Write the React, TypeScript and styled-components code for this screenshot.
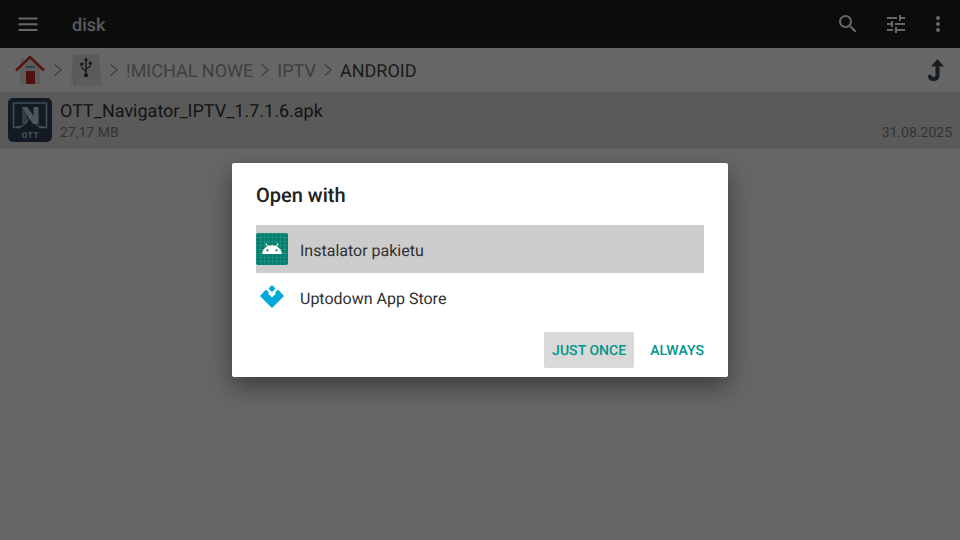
import React, {FC} from 'react';
import styled, {createGlobalStyle} from 'styled-components';

const GlobalStyle = createGlobalStyle`
    html, body {
        margin: 0;
        padding: 0;
        width: 960px;
        height: 540px;
        overflow: hidden;
        background: #fff;
        font-family: Roboto, "Liberation Sans", sans-serif;
        text-rendering: geometricPrecision;
    }
`;

const Page = styled.div`
    position: relative;
    width: 960px;
    height: 540px;
    display: flex;
    flex-direction: column;
    background: #ffffff;
`;

const AppBar = styled.header`
    flex: 0 0 48px;
    display: flex;
    align-items: center;
    background: #202020;
    color: #ffffff;
    padding: 0 10px 0 16px;
`;

const Title = styled.div`
    flex: 1;
    margin-left: 32px;
    padding-top: 2px;
    font-size: 18px;
    font-weight: 500;
    color: #e0e0e0;
`;

const ActionIcon = styled.svg<{gap: number}>`
    display: block;
    margin-left: ${props => props.gap}px;
`;

const Breadcrumb = styled.nav`
    flex: 0 0 44px;
    display: flex;
    align-items: center;
    padding: 0 16px 0 14px;
    font-size: 18px;
    box-sizing: border-box;
    border-bottom: 1px solid #f2f2f2;
`;

const Crumb = styled.span<{active?: boolean}>`
    padding-top: 3px;
    color: ${props => (props.active ? '#444444' : '#9c9c9c')};
`;

const Chevron = styled.svg`
    margin: 0 8px;
    flex: none;
`;

const UpButton = styled.div`
    margin-left: auto;
    display: flex;
`;

const FileRow = styled.div`
    flex: 0 0 57px;
    display: flex;
    align-items: stretch;
    box-sizing: border-box;
    background: #e0e0e0;
    padding: 6px 8px 0 8px;
    border-bottom: 1px solid #ececec;
`;

const FileInfo = styled.div`
    flex: 1;
    margin-left: 8px;
`;

const FileName = styled.div`
    font-size: 18px;
    line-height: 26px;
    padding-top: 1px;
    color: #333333;
`;

const FileMeta = styled.div`
    display: flex;
    justify-content: space-between;
    font-size: 14px;
    line-height: 16px;
    color: #808080;
`;

const Scrim = styled.div`
    position: absolute;
    inset: 0;
    background: rgba(0, 0, 0, 0.6);
    display: flex;
    align-items: center;
    justify-content: center;
`;

const Dialog = styled.div`
    width: 496px;
    height: 214px;
    box-sizing: border-box;
    padding: 0 24px;
    background: #ffffff;
    border-radius: 2px;
    box-shadow: 0 10px 24px rgba(0, 0, 0, 0.4);
    display: flex;
    flex-direction: column;
`;

const DialogTitle = styled.div`
    height: 62px;
    box-sizing: border-box;
    padding-top: 2px;
    display: flex;
    align-items: center;
    font-size: 20px;
    font-weight: 500;
    color: #212121;
`;

const Option = styled.div<{selected?: boolean}>`
    height: 48px;
    display: flex;
    align-items: center;
    background: ${props => (props.selected ? '#cccccc' : 'transparent')};
    font-size: 16px;
    color: #303030;
`;

const OptionLabel = styled.span`
    margin-left: 12px;
    padding-top: 2px;
`;

const Actions = styled.div`
    display: flex;
    justify-content: flex-end;
    margin: 11px -8px 0 0;
    gap: 8px;
`;

const ActionButton = styled.div<{focused?: boolean}>`
    height: 36px;
    box-sizing: border-box;
    display: flex;
    align-items: center;
    padding: 2px 8px 0;
    border-radius: 2px;
    background: ${props => (props.focused ? '#d9d9d9' : 'transparent')};
    color: #009688;
    font-size: 14px;
    font-weight: 500;
    letter-spacing: 0.05px;
`;

const MenuIcon: FC = () => (
    <svg width="24" height="24" viewBox="0 0 24 24" fill="#ffffff">
        <path d="M2.5 5.5h19v2h-19zM2.5 11.2h19v2h-19zM2.5 17h19v2h-19z" />
    </svg>
);

const SearchIcon: FC = () => (
    <ActionIcon gap={0} width="24" height="24" viewBox="0 0 24 24" fill="#ffffff">
        <path d="M15.5 14h-.79l-.28-.27A6.471 6.471 0 0 0 16 9.5 6.5 6.5 0 1 0 9.5 16c1.61 0 3.09-.59 4.23-1.57l.27.28v.79l5 4.99L20.49 19l-4.99-5zm-6 0C7.01 14 5 11.99 5 9.5S7.01 5 9.5 5 14 7.01 14 9.5 11.99 14 9.5 14z" />
    </ActionIcon>
);

const TuneIcon: FC = () => (
    <ActionIcon gap={24} width="24" height="24" viewBox="0 0 24 24" fill="#ffffff">
        <path d="M3 17v2h6v-2H3zM3 5v2h10V5H3zm10 16v-2h8v-2h-8v-2h-2v6h2zM7 9v2H3v2h4v2h2V9H7zm14 4v-2H11v2h10zm-6-4h2V7h4V5h-4V3h-2v6z" />
    </ActionIcon>
);

const DotsIcon: FC = () => (
    <ActionIcon gap={18} width="24" height="24" viewBox="0 0 24 24" fill="#ffffff">
        <circle cx="12" cy="6" r="2" />
        <circle cx="12" cy="12" r="2" />
        <circle cx="12" cy="18" r="2" />
    </ActionIcon>
);

const ChevronGlyph: FC = () => (
    <Chevron width="8" height="12" viewBox="0 0 8 12" fill="none" stroke="#9a9a9a" strokeWidth="1.3">
        <path d="M0.8 0.6 7 6 0.8 11.4" />
    </Chevron>
);

const HomeIcon: FC = () => (
    <svg width="32" height="32" viewBox="0 0 32 32">
        <rect x="7" y="4" width="3" height="8" fill="#dcdcdc" />
        <path d="M6 14 16 5l10 9v16H6z" fill="#e4e4e4" />
        <rect x="12" y="17" width="9" height="13" fill="#c9262c" />
        <rect x="12" y="12" width="9" height="1.6" fill="#4aa3c8" />
        <path d="M2 16.5 16 3l14 13.5" fill="none" stroke="#d8343a" strokeWidth="2.6" />
    </svg>
);

const UsbDriveIcon: FC = () => (
    <svg width="32" height="32" viewBox="0 0 32 32">
        <path d="M3 0.5h26l2 25H1z" fill="#e2e2e2" />
        <rect x="0.5" y="25" width="31" height="7" rx="1.5" fill="#ececec" />
        <circle cx="5" cy="28.5" r="1.1" fill="#7bd648" />
        <path
            d="M16 3.5l-2.2 3h1.5v9.500l-3-2.600v-2.200h1v-2.400h-3v2.400h1v3l4 3.400v1.800a2 2 0 1 0 1.400 0v-4l4-2.800v-2.200h1.100v-2.600h-2.900v2.600h.9v1.500l-3.100 2.100V6.500h1.500z"
            fill="#333333"
        />
    </svg>
);

const UpIcon: FC = () => (
    <svg width="16" height="22" viewBox="0 0 16 22" fill="none">
        <path d="M9.500 0 16 7.500H3z" fill="#3c4a54" />
        <path d="M9.500 6v10.500a3.500 3.500 0 0 1-3.500 3.500H5A3.200 3.200 0 0 1 2 17.500" stroke="#3c4a54" strokeWidth="4" strokeLinecap="round" />
    </svg>
);

const OttIcon: FC = () => (
    <svg width="44" height="44" viewBox="0 0 44 44">
        <rect width="44" height="44" rx="5" fill="#2f4558" />
        <path d="M13 29.500H5.500V5H38.500V29.500H31" fill="none" stroke="#a9bccb" strokeWidth="1.600" />
        <rect x="14" y="9" width="5" height="17" fill="#7b93a6" />
        <rect x="25.500" y="9" width="5" height="17" fill="#c4d3de" />
        <path d="M14 9h5.500l11 17h-5.500z" fill="#c4d3de" />
        <path d="M8 29c7 0 11-3 14-12 3 9 7 12 14 12" fill="none" stroke="#d8e4ec" strokeWidth="1" />
        <text x="22.500" y="39.500" fontSize="8" fontWeight="700" fontFamily="Roboto" textAnchor="middle" letterSpacing="0.800" fill="#c4d3de">
            OTT
        </text>
    </svg>
);

const InstallerIcon: FC = () => (
    <svg width="32" height="32" viewBox="0 0 32 32">
        <defs>
            <pattern id="grid" width="4" height="4" patternUnits="userSpaceOnUse">
                <path d="M4 0H0v4" fill="none" stroke="#ffffff" strokeOpacity="0.3" strokeWidth="0.600" />
            </pattern>
        </defs>
        <rect width="32" height="32" rx="2" fill="#00806f" />
        <rect width="32" height="32" rx="2" fill="url(#grid)" />
        <path
            d="M6 21c.3-3.600 2.200-6.300 5-7.600L9.400 10.600l.8-.5 1.700 2.900a11 11 0 0 1 8.200 0l1.700-2.900.8.5-1.600 2.800c2.800 1.300 4.700 4 5 7.600z"
            fill="#ffffff"
        />
        <circle cx="11.500" cy="17.300" r="1.100" fill="#00806f" />
        <circle cx="20.500" cy="17.300" r="1.100" fill="#00806f" />
    </svg>
);

const UptodownIcon: FC = () => (
    <svg width="32" height="32" viewBox="0 0 32 32" fill="#00a8d8">
        <path d="M16 4l3.600 3.600L16 11.200l-3.600-3.600z" />
        <path d="M10 8.500l3 3-1 1 4 4 4-4-1-1 3-3 6 6.500L16 27 4 15z" />
    </svg>
);

const App: FC = () => (
    <Page>
        <GlobalStyle />
        <AppBar>
            <MenuIcon />
            <Title>disk</Title>
            <SearchIcon />
            <TuneIcon />
            <DotsIcon />
        </AppBar>
        <Breadcrumb>
            <HomeIcon />
            <ChevronGlyph />
            <UsbDriveIcon />
            <ChevronGlyph />
            <Crumb>!MICHAL NOWE</Crumb>
            <ChevronGlyph />
            <Crumb>IPTV</Crumb>
            <ChevronGlyph />
            <Crumb active>ANDROID</Crumb>
            <UpButton>
                <UpIcon />
            </UpButton>
        </Breadcrumb>
        <FileRow>
            <OttIcon />
            <FileInfo>
                <FileName>OTT_Navigator_IPTV_1.7.1.6.apk</FileName>
                <FileMeta>
                    <span>27,17 MB</span>
                    <span>31.08.2025</span>
                </FileMeta>
            </FileInfo>
        </FileRow>
        <Scrim>
            <Dialog>
                <DialogTitle>Open with</DialogTitle>
                <Option selected>
                    <InstallerIcon />
                    <OptionLabel>Instalator pakietu</OptionLabel>
                </Option>
                <Option>
                    <UptodownIcon />
                    <OptionLabel>Uptodown App Store</OptionLabel>
                </Option>
                <Actions>
                    <ActionButton focused>JUST ONCE</ActionButton>
                    <ActionButton>ALWAYS</ActionButton>
                </Actions>
            </Dialog>
        </Scrim>
    </Page>
);

export default App;
